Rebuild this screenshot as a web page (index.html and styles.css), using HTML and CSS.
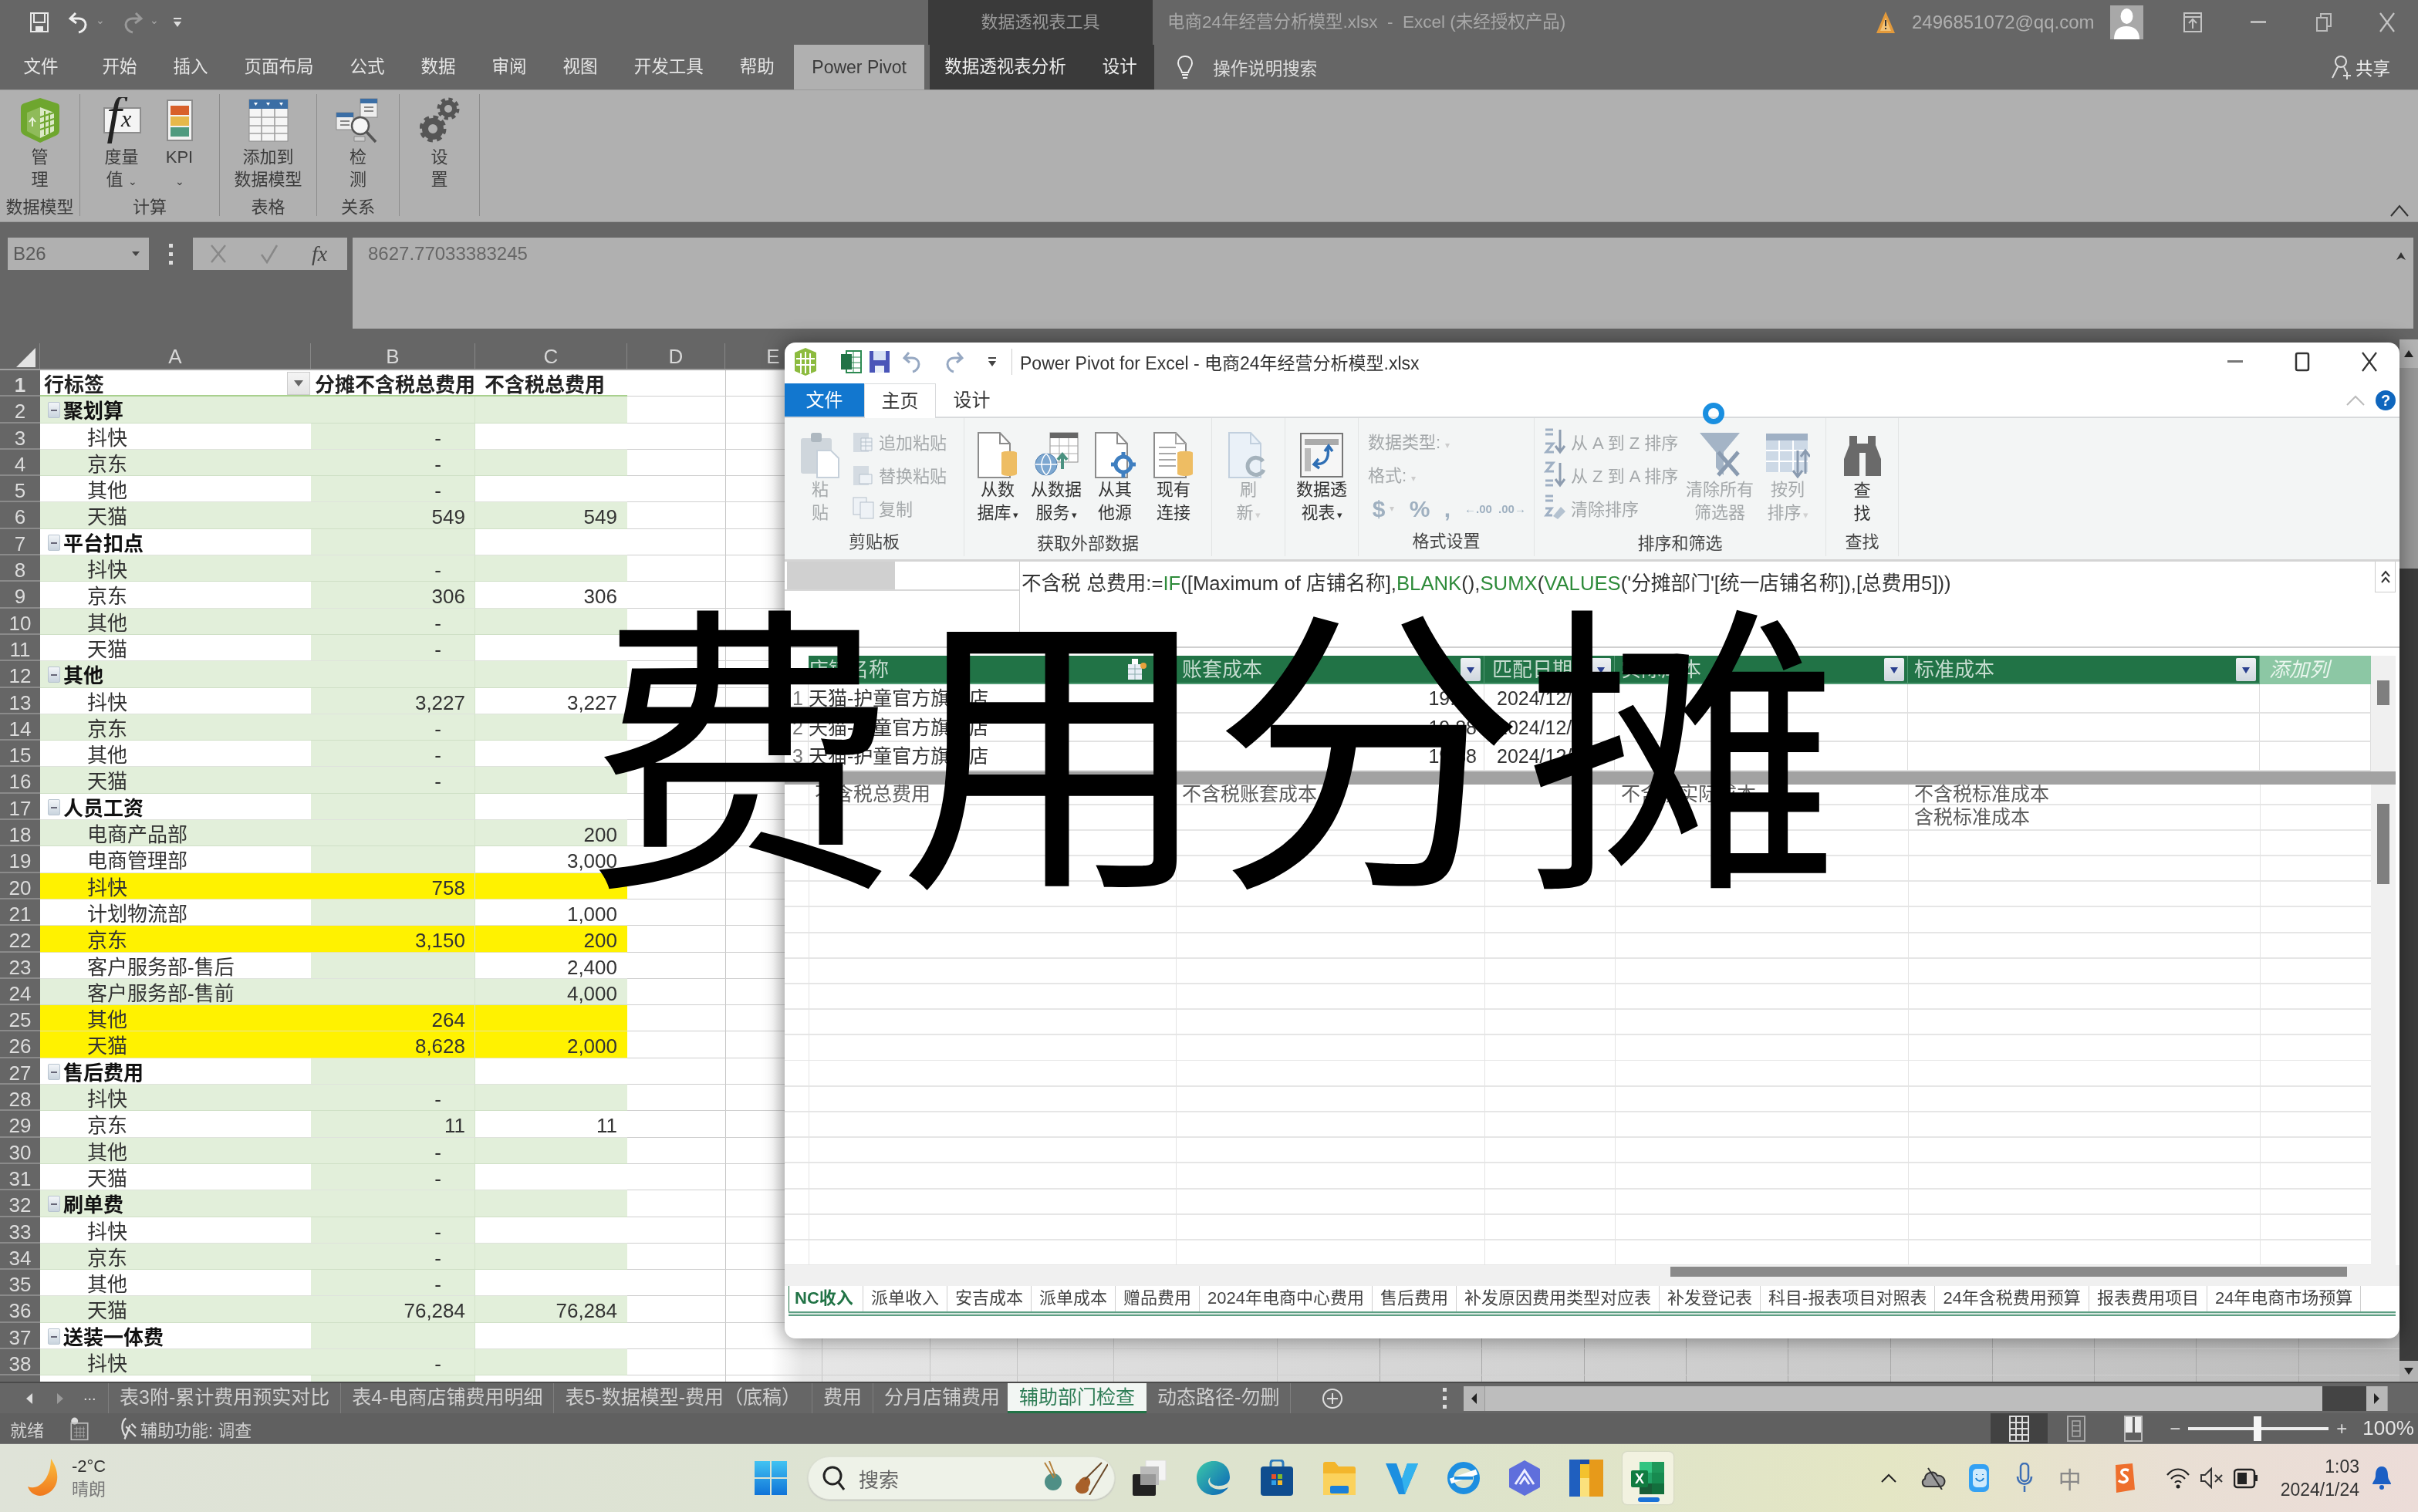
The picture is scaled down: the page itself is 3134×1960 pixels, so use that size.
FILE: index.html
```html
<!DOCTYPE html>
<html lang="zh-CN">
<head>
<meta charset="utf-8">
<title>费用分摊</title>
<link rel="stylesheet" href="styles.css">
</head>
<body>
<div class="app">
<div class="screen">

<header class="xl-title">
  <div class="qat">
    <svg width="26" height="28" viewBox="0 0 26 28"><path d="M2 2h22v24H2z" fill="none" stroke="#e8e8e8" stroke-width="2"/><path d="M6 2h14v12H6z" fill="#666" stroke="#e8e8e8" stroke-width="2"/><path d="M8 26v-7h10v7z" fill="#e8e8e8"/></svg>
    <svg class="q-undo" width="28" height="30" viewBox="0 0 28 30"><path d="M10 3 3 10l8 6M4 10h10c6 0 9 4 9 8 0 5-4 9-9 10" fill="none" stroke="#eee" stroke-width="3"/></svg>
    <span class="chev">⌄</span>
    <svg class="q-redo" width="28" height="30" viewBox="0 0 28 30"><path d="M18 3l7 7-8 6M24 10H14C8 10 5 14 5 18c0 5 4 9 9 10" fill="none" stroke="#999" stroke-width="3"/></svg>
    <span class="chev">⌄</span>
    <svg class="q-more" width="12" height="14" viewBox="0 0 12 14"><path d="M1 1h10v2H1zM1 6h10l-5 7z" fill="#ddd"/></svg>
  </div>
  <div class="ctx-label">数据透视表工具</div>
  <div class="doc-title">电商24年经营分析模型.xlsx&nbsp; -&nbsp; Excel (未经授权产品)</div>
  <div class="acct">
    <svg width="26" height="30" viewBox="0 0 26 30"><path d="M13 1 25 29H1z" fill="#e39a3b"/><path d="M13 9 20 26H6z" fill="#f3c276"/><path d="M12 12h2v8h-2zM12 22h2v2h-2z" fill="#333"/></svg>
    <span class="email">2496851072@qq.com</span>
    <span class="avatar"><svg width="43" height="44" viewBox="0 0 43 44"><ellipse cx="21.500" cy="14" rx="8" ry="10" fill="#fff"/><path d="M5 44c0-12 6-17 16-17s17 5 17 17z" fill="#fff"/></svg></span>
    <span class="winbtn"><svg width="26" height="28" viewBox="0 0 26 28"><path d="M2 2h22v24H2zM2 7h22M13 22V11M8 15l5-5 5 5" fill="none" stroke="#c4c4c4" stroke-width="2"/></svg></span>
    <span class="winbtn"><svg width="20" height="4" viewBox="0 0 20 4"><path d="M0 0h20v3H0z" fill="#bbb"/></svg></span>
    <span class="winbtn"><svg width="22" height="26" viewBox="0 0 22 26"><path d="M2 7h13v17H2zM7 7V2h13v16h-5" fill="none" stroke="#bbb" stroke-width="2"/></svg></span>
    <span class="winbtn"><svg width="22" height="28" viewBox="0 0 22 28"><path d="M2 2 20 26M20 2 2 26" stroke="#c4c4c4" stroke-width="2.200"/></svg></span>
  </div>
</header>

<nav class="xl-tabs">
  <span class="tab file">文件</span><span class="tab">开始</span><span class="tab">插入</span><span class="tab">页面布局</span><span class="tab">公式</span><span class="tab">数据</span><span class="tab">审阅</span><span class="tab">视图</span><span class="tab">开发工具</span><span class="tab">帮助</span>
  <span class="tab active">Power Pivot</span>
  <span class="ctx-tabs"><span class="ctx-tab">数据透视表分析</span><span class="ctx-tab">设计</span></span>
  <span class="tell">
    <svg width="24" height="32" viewBox="0 0 24 32"><path d="M12 2C6 2 3 6 3 11c0 5 4 7 5 12h8c1-5 5-7 5-12 0-5-3-9-9-9zM8 26h8M9 30h6" fill="none" stroke="#eee" stroke-width="2"/></svg>
    操作说明搜索
  </span>
  <span class="share">
    <svg width="28" height="32" viewBox="0 0 28 32"><circle cx="13" cy="9" r="7" fill="none" stroke="#ddd" stroke-width="2"/><path d="M9 16 2 30M17 16l3 6M16 27h10M21 22v10" fill="none" stroke="#ddd" stroke-width="2"/></svg>
    共享
  </span>
</nav>

<section class="xl-ribbon">
  <div class="xg w1">
    <div class="xg-body">
      <div class="xbtn"><svg width="52" height="60" viewBox="0 0 52 60"><path d="M26 1 48 8c3 1 3 3 3 6v28c0 4-1 6-5 8L26 59 7 50c-4-2-6-4-6-8V14c0-3 1-5 4-6z" fill="#6ea62e"/><path d="M26 13 44 20v24l-18 9z" fill="#dbe9c6"/><path d="M26 13 9 20v24l17 9z" fill="#8fbb5a"/><path d="M32 18v31M38 20v27M26 26l18-6M26 34l18-6M26 42l18-6" stroke="#6ea62e" stroke-width="2"/><path d="M16 38V28M12 32l4-5 4 5" fill="none" stroke="#e9f2dd" stroke-width="2"/></svg><span>管<br>理</span></div>
    </div>
    <div class="xg-label">数据模型</div>
  </div>
  <div class="xg w2">
    <div class="xg-body">
      <div class="xbtn"><svg width="52" height="60" viewBox="0 0 52 60"><rect x="3" y="14" width="47" height="32" fill="#f4f4f4" stroke="#8d8d8d" stroke-width="2"/><text x="6" y="47" class="fxf">f</text><text x="25" y="38" class="fxt">x</text></svg><span>度量<br>值 <small>⌄</small></span></div>
      <div class="xbtn"><svg width="36" height="56" viewBox="0 0 36 56"><rect x="2" y="2" width="32" height="52" fill="#f2f2f2" stroke="#8c8c8c" stroke-width="2"/><rect x="6" y="9" width="24" height="12" fill="#d8602a"/><rect x="6" y="23" width="24" height="12" fill="#e6b84a"/><rect x="6" y="37" width="24" height="12" fill="#4f9a7f"/></svg><span>KPI<br><small>⌄</small></span></div>
    </div>
    <div class="xg-label">计算</div>
  </div>
  <div class="xg w3">
    <div class="xg-body">
      <div class="xbtn wide"><svg width="52" height="56" viewBox="0 0 52 56"><rect x="1" y="1" width="50" height="54" fill="#f5f5f5" stroke="#8c8c8c"/><rect x="1" y="1" width="50" height="12" fill="#3b6ea5"/><path d="M17 13v42M34 13v42M1 24h50M1 35h50M1 45h50" stroke="#a0a0a0" stroke-width="1.600"/><path d="M7 5h5l-2.500 4zM23 5h5l-2.500 4zM40 5h5l-2.500 4z" fill="#fff"/></svg><span>添加到<br>数据模型</span></div>
    </div>
    <div class="xg-label">表格</div>
  </div>
  <div class="xg w4">
    <div class="xg-body">
      <div class="xbtn"><svg width="58" height="58" viewBox="0 0 58 58"><rect x="32" y="1" width="22" height="24" fill="#eee" stroke="#888"/><rect x="32" y="1" width="22" height="6" fill="#3b6ea5"/><path d="M37 12h12M37 17h12" stroke="#888" stroke-width="2"/><rect x="1" y="19" width="22" height="22" fill="#eee" stroke="#888"/><rect x="1" y="19" width="22" height="6" fill="#3b6ea5"/><path d="M6 30h12M6 35h12" stroke="#888" stroke-width="2"/><circle cx="32" cy="36" r="11" fill="#f5f5f5" stroke="#555" stroke-width="2.500"/><path d="m40 44 12 13" stroke="#555" stroke-width="3.500"/><path d="M24 50h14v6H24z" fill="#d0d0d0" stroke="#888"/></svg><span>检<br>测</span></div>
    </div>
    <div class="xg-label">关系</div>
  </div>
  <div class="xg w5">
    <div class="xg-body">
      <div class="xbtn"><svg width="52" height="58" viewBox="0 0 52 58"><g fill="none" stroke="#555"><circle cx="37" cy="14" r="8" stroke-width="6"/><circle cx="37" cy="14" r="12" stroke-width="5" stroke-dasharray="5 4.420"/><circle cx="17" cy="40" r="10" stroke-width="8"/><circle cx="17" cy="40" r="15" stroke-width="5" stroke-dasharray="6.500 5.280"/></g></svg><span>设<br>置</span></div>
    </div>
    <div class="xg-label xg-empty">&nbsp;</div>
  </div>
  <svg class="collapse" width="24" height="16" viewBox="0 0 24 16"><path d="M1 15 12 2l11 13" fill="none" stroke="#333" stroke-width="2"/></svg>
</section>

<section class="xl-formula">
  <div class="namebox"><span>B26</span><svg width="10" height="6" viewBox="0 0 10 6"><path d="M0 0h10L5 6z" fill="#444"/></svg></div>
  <div class="fdots"><i></i><i></i><i></i></div>
  <div class="fbtns">
    <svg width="22" height="26" viewBox="0 0 22 26"><path d="M2 2 20 24M20 2 2 24" stroke="#888" stroke-width="2.500"/></svg>
    <svg width="24" height="26" viewBox="0 0 24 26"><path d="M2 14 9 24 22 2" fill="none" stroke="#888" stroke-width="2.500"/></svg>
    <span class="fxlabel">fx</span>
  </div>
  <div class="fbar"><span>8627.77033383245</span><svg width="12" height="10" viewBox="0 0 12 10"><path d="M6 0l6 10-6-3-6 3z" fill="#333"/></svg></div>
</section>

<main class="sheetwrap">
  <div class="sheet">
    <div class="colhdr">
      <span class="corner"><svg width="26" height="26" viewBox="0 0 26 26"><path d="M25 0v25H0z" fill="#e4e4e4"/></svg></span>
      <span>A</span><span>B</span><span>C</span><span>D</span><span>E</span><span class="none"></span>
    </div>
    <div class="rows">
      <div class="r hd"><span class="rn">1</span><span class="a">行标签<i class="ddb"><svg width="12" height="8" viewBox="0 0 12 8"><path d="M0 0h12L6 8z" fill="#666"/></svg></i></span><span class="b clip">分摊不含税总费用</span><span class="c">不含税总费用</span><span class="x"></span></div>
      <div class="r g"><span class="rn">2</span><span class="a grp"><i class="tog"></i>聚划算</span><span class="b"></span><span class="c"></span><span class="x"></span></div>
      <div class="r"><span class="rn">3</span><span class="a leaf">抖快</span><span class="b dash">-</span><span class="c"></span><span class="x"></span></div>
      <div class="r g"><span class="rn">4</span><span class="a leaf">京东</span><span class="b dash">-</span><span class="c"></span><span class="x"></span></div>
      <div class="r"><span class="rn">5</span><span class="a leaf">其他</span><span class="b dash">-</span><span class="c"></span><span class="x"></span></div>
      <div class="r g"><span class="rn">6</span><span class="a leaf">天猫</span><span class="b">549</span><span class="c">549</span><span class="x"></span></div>
      <div class="r"><span class="rn">7</span><span class="a grp"><i class="tog"></i>平台扣点</span><span class="b"></span><span class="c"></span><span class="x"></span></div>
      <div class="r g"><span class="rn">8</span><span class="a leaf">抖快</span><span class="b dash">-</span><span class="c"></span><span class="x"></span></div>
      <div class="r"><span class="rn">9</span><span class="a leaf">京东</span><span class="b">306</span><span class="c">306</span><span class="x"></span></div>
      <div class="r g"><span class="rn">10</span><span class="a leaf">其他</span><span class="b dash">-</span><span class="c"></span><span class="x"></span></div>
      <div class="r"><span class="rn">11</span><span class="a leaf">天猫</span><span class="b dash">-</span><span class="c"></span><span class="x"></span></div>
      <div class="r g"><span class="rn">12</span><span class="a grp"><i class="tog"></i>其他</span><span class="b"></span><span class="c"></span><span class="x"></span></div>
      <div class="r"><span class="rn">13</span><span class="a leaf">抖快</span><span class="b">3,227</span><span class="c">3,227</span><span class="x"></span></div>
      <div class="r g"><span class="rn">14</span><span class="a leaf">京东</span><span class="b dash">-</span><span class="c"></span><span class="x"></span></div>
      <div class="r"><span class="rn">15</span><span class="a leaf">其他</span><span class="b dash">-</span><span class="c"></span><span class="x"></span></div>
      <div class="r g"><span class="rn">16</span><span class="a leaf">天猫</span><span class="b dash">-</span><span class="c"></span><span class="x"></span></div>
      <div class="r"><span class="rn">17</span><span class="a grp"><i class="tog"></i>人员工资</span><span class="b"></span><span class="c"></span><span class="x"></span></div>
      <div class="r g"><span class="rn">18</span><span class="a leaf">电商产品部</span><span class="b"></span><span class="c">200</span><span class="x"></span></div>
      <div class="r"><span class="rn">19</span><span class="a leaf">电商管理部</span><span class="b"></span><span class="c">3,000</span><span class="x"></span></div>
      <div class="r y"><span class="rn">20</span><span class="a leaf">抖快</span><span class="b">758</span><span class="c"></span><span class="x"></span></div>
      <div class="r"><span class="rn">21</span><span class="a leaf">计划物流部</span><span class="b"></span><span class="c">1,000</span><span class="x"></span></div>
      <div class="r y"><span class="rn">22</span><span class="a leaf">京东</span><span class="b">3,150</span><span class="c">200</span><span class="x"></span></div>
      <div class="r"><span class="rn">23</span><span class="a leaf">客户服务部-售后</span><span class="b"></span><span class="c">2,400</span><span class="x"></span></div>
      <div class="r g"><span class="rn">24</span><span class="a leaf">客户服务部-售前</span><span class="b"></span><span class="c">4,000</span><span class="x"></span></div>
      <div class="r y"><span class="rn">25</span><span class="a leaf">其他</span><span class="b">264</span><span class="c"></span><span class="x"></span></div>
      <div class="r y"><span class="rn">26</span><span class="a leaf">天猫</span><span class="b">8,628</span><span class="c">2,000</span><span class="x"></span></div>
      <div class="r"><span class="rn">27</span><span class="a grp"><i class="tog"></i>售后费用</span><span class="b"></span><span class="c"></span><span class="x"></span></div>
      <div class="r g"><span class="rn">28</span><span class="a leaf">抖快</span><span class="b dash">-</span><span class="c"></span><span class="x"></span></div>
      <div class="r"><span class="rn">29</span><span class="a leaf">京东</span><span class="b">11</span><span class="c">11</span><span class="x"></span></div>
      <div class="r g"><span class="rn">30</span><span class="a leaf">其他</span><span class="b dash">-</span><span class="c"></span><span class="x"></span></div>
      <div class="r"><span class="rn">31</span><span class="a leaf">天猫</span><span class="b dash">-</span><span class="c"></span><span class="x"></span></div>
      <div class="r g"><span class="rn">32</span><span class="a grp"><i class="tog"></i>刷单费</span><span class="b"></span><span class="c"></span><span class="x"></span></div>
      <div class="r"><span class="rn">33</span><span class="a leaf">抖快</span><span class="b dash">-</span><span class="c"></span><span class="x"></span></div>
      <div class="r g"><span class="rn">34</span><span class="a leaf">京东</span><span class="b dash">-</span><span class="c"></span><span class="x"></span></div>
      <div class="r"><span class="rn">35</span><span class="a leaf">其他</span><span class="b dash">-</span><span class="c"></span><span class="x"></span></div>
      <div class="r g"><span class="rn">36</span><span class="a leaf">天猫</span><span class="b">76,284</span><span class="c">76,284</span><span class="x"></span></div>
      <div class="r"><span class="rn">37</span><span class="a grp"><i class="tog"></i>送装一体费</span><span class="b"></span><span class="c"></span><span class="x"></span></div>
      <div class="r g"><span class="rn">38</span><span class="a leaf">抖快</span><span class="b dash">-</span><span class="c"></span><span class="x"></span></div>
      <div class="r"><span class="rn"></span><span class="a"></span><span class="b"></span><span class="c"></span><span class="x"></span></div>
    </div>
  </div>
  <div class="vscroll">
    <span class="vbtn"><svg width="12" height="9" viewBox="0 0 12 9"><path d="M6 0l6 9H0z" fill="#222"/></svg></span>
    <span class="vthumb"></span>
    <span class="vtrack"></span>
    <span class="vbtn low"><svg width="12" height="9" viewBox="0 0 12 9"><path d="M0 0h12L6 9z" fill="#222"/></svg></span>
  </div>
</main>

<div class="sheettabs">
  <span class="navs"><svg width="8" height="14" viewBox="0 0 8 14"><path d="M8 0v14L0 7z" fill="#ddd"/></svg><svg width="8" height="14" viewBox="0 0 8 14"><path d="M0 0v14l8-7z" fill="#999"/></svg><span class="more">...</span></span>
  <span class="stab">表3附-累计费用预实对比</span><span class="stab">表4-电商店铺费用明细</span><span class="stab">表5-数据模型-费用（底稿）</span><span class="stab">费用</span><span class="stab">分月店铺费用</span><span class="stab on">辅助部门检查</span><span class="stab">动态路径-勿删</span>
  <span class="addsheet"><svg width="28" height="28" viewBox="0 0 28 28"><circle cx="14" cy="14" r="12" fill="none" stroke="#ddd" stroke-width="2"/><path d="M14 7v14M7 14h14" stroke="#ddd" stroke-width="2"/></svg></span>
  <span class="tdots"><i></i><i></i><i></i></span>
  <span class="hscroll"><span class="hb"><svg width="7" height="14" viewBox="0 0 7 14"><path d="M7 0v14L0 7z" fill="#222"/></svg></span><span class="hthumb"></span><span class="htrack"></span><span class="hb"><svg width="7" height="14" viewBox="0 0 7 14"><path d="M0 0v14l7-7z" fill="#222"/></svg></span></span>
</div>

<div class="statusbar">
  <span class="ready">就绪</span>
  <svg class="calc" width="26" height="34" viewBox="0 0 26 34"><circle cx="6" cy="6" r="5" fill="#ddd"/><rect x="1" y="9" width="24" height="24" fill="none" stroke="#bbb" stroke-width="2"/><path d="M5 17h16M5 22h16M5 27h16M9 14v16M14 14v16M19 14v16" stroke="#aaa"/></svg>
  <svg class="acc" width="26" height="34" viewBox="0 0 26 34"><path d="M10 2C4 6 2 18 9 27M16 12 8 32M10 14l14 14M18 10 24 16" fill="none" stroke="#ddd" stroke-width="2.500"/></svg>
  <span class="accessibility">辅助功能: 调查</span>
  <span class="viewbtns">
    <span class="vb on"><svg width="28" height="36" viewBox="0 0 28 36"><path d="M2 2h24v32H2zM10 2v32M18 2v32M2 10h24M2 18h24M2 26h24" fill="none" stroke="#ddd" stroke-width="2"/></svg></span>
    <span class="vb"><svg width="26" height="36" viewBox="0 0 26 36"><path d="M2 2h22v32H2z" fill="none" stroke="#aaa" stroke-width="2"/><path d="M8 8h10v20H8zM8 14h10M8 21h10" fill="none" stroke="#aaa" stroke-width="1.500"/></svg></span>
    <span class="vb"><svg width="26" height="36" viewBox="0 0 26 36"><path d="M2 2h22v32H2z" fill="none" stroke="#bbb" stroke-width="2"/><path d="M3 3h9v20H3zM15 3h8v20h-8z" fill="#eee"/></svg></span>
  </span>
  <span class="zoomctl"><i class="zm">−</i><span class="slider"><span class="knob"></span></span><i class="zm">+</i></span>
  <span class="pct">100%</span>
</div>

<footer class="taskbar">
  <div class="weather">
    <svg width="42" height="50" viewBox="0 0 42 50"><defs><linearGradient id="moon" x1="0" y1="0" x2="0" y2="1"><stop offset="0" stop-color="#fbbf3e"/><stop offset="1" stop-color="#f0781d"/></linearGradient></defs><path d="M30 0c10 14 14 36-6 46C14 51 3 46 0 36c14 6 30-10 30-36z" fill="url(#moon)"/></svg>
    <div class="wtext"><span>-2°C</span><span class="dim">晴朗</span></div>
  </div>
  <div class="center">
    <svg class="winlogo" width="42" height="44" viewBox="0 0 42 44"><defs><linearGradient id="wl" x1="0" y1="0" x2="0" y2="1"><stop offset="0" stop-color="#42c3f2"/><stop offset="1" stop-color="#0f73d8"/></linearGradient></defs><path d="M0 0h20v21H0zM22 0h20v21H22zM0 23h20v21H0zM22 23h20v21H22z" fill="url(#wl)"/></svg>
    <div class="search">
      <svg width="32" height="36" viewBox="0 0 32 36"><circle cx="14" cy="15" r="11" fill="none" stroke="#222" stroke-width="3"/><path d="m22 24 7 9" stroke="#222" stroke-width="3"/></svg>
      <span>搜索</span>
      <svg class="violin" width="84" height="44" viewBox="0 0 84 44"><circle cx="13" cy="27" r="11" fill="#4f8f86"/><path d="M2 2l12 20M8 0l8 20" stroke="#b4813c" stroke-width="2"/><path d="M48 24c6-6 12-4 13 2 1 5-3 6-2 10 0 5-8 8-13 5-5-3-5-9-2-12 2-2 3-3 4-5z" fill="#a8602a"/><path d="M54 24 76 2M60 44 84 4" stroke="#6b4a2a" stroke-width="2"/></svg>
    </div>
    <svg class="tk tv" width="46" height="46" viewBox="0 0 46 46"><rect x="18" y="0" width="26" height="26" fill="#f4f4f4" stroke="#ddd"/><rect x="11" y="8" width="24" height="24" fill="#bbb"/><rect x="1" y="18" width="30" height="28" rx="2" fill="#222"/><rect x="11" y="18" width="20" height="14" fill="#999"/></svg>
    <svg class="tk" width="46" height="46" viewBox="0 0 46 46"><defs><linearGradient id="ed" x1="0" y1="0" x2="1" y2="1"><stop offset="0" stop-color="#3cc9a8"/><stop offset="1" stop-color="#0a62b8"/></linearGradient></defs><path d="M23 1C10 1 1 11 1 23c0 13 10 22 22 22 8 0 15-4 19-10-6 3-15 4-21 0-5-3-7-10-2-13-4 8 6 12 12 11 7 0 13-4 13-11C44 9 35 1 23 1z" fill="url(#ed)"/></svg>
    <svg class="tk" width="44" height="48" viewBox="0 0 44 48"><path d="M14 10V5c0-3 2-4 4-4h8c2 0 4 1 4 4v5" fill="none" stroke="#2d7bbd" stroke-width="3"/><rect x="1" y="9" width="42" height="38" rx="4" fill="#0f4d8f"/><path d="M15 19h6v6h-6z" fill="#e8502a"/><path d="M23 19h6v6h-6z" fill="#7db92e"/><path d="M15 27h6v6h-6z" fill="#2f9fe8"/><path d="M23 27h6v6h-6z" fill="#f3b92a"/></svg>
    <svg class="tk" width="44" height="44" viewBox="0 0 44 44"><path d="M1 4c0-2 1-3 3-3h12l5 6h19c2 0 3 1 3 3v34H1z" fill="#f3b62c"/><path d="M1 16h42v28H1z" fill="#fbd25c"/><rect x="10" y="32" width="24" height="10" rx="2" fill="#1b80d8"/></svg>
    <svg class="tk" width="44" height="46" viewBox="0 0 44 46"><path d="M1 4h14l7 20 7-20h14L26 44h-8z" fill="#1c8fe0"/><path d="M22 24l7-20h14L26 44z" fill="#32b2ee"/></svg>
    <svg class="tk" width="42" height="44" viewBox="0 0 42 44"><circle cx="21" cy="22" r="17" fill="none" stroke="#1d8ee0" stroke-width="8"/><path d="M4 26 38 14" stroke="#fff" stroke-width="7"/><path d="M9 22h24" stroke="#1d8ee0" stroke-width="4"/></svg>
    <svg class="tk" width="42" height="48" viewBox="0 0 42 48"><path d="M21 1 41 12v24L21 47 1 36V12z" fill="#5f6fdc"/><path d="M9 32 21 14l12 18M15 32l6-9 6 9" fill="none" stroke="#eef" stroke-width="3"/></svg>
    <svg class="tk" width="44" height="48" viewBox="0 0 44 48"><path d="M0 0h44v48H0z" fill="#1a4fa8"/><path d="M8 6h36v42H8z" fill="#f3c22e"/><path d="M26 0h18v48H26z" fill="#e79a1a"/><path d="M0 0h14v48H0z" fill="#1f5fbf"/><path d="M14 24h12v24H14z" fill="#fbe17c"/></svg>
    <span class="xltile"><svg width="46" height="46" viewBox="0 0 46 46"><rect x="12" y="2" width="32" height="42" rx="2" fill="#21a366"/><path d="M12 2h32v14H12z" fill="#33c481"/><path d="M12 30h32v14H12z" fill="#185c37"/><path d="M28 2h16v42H28z" fill="#107c41" opacity=".6"/><rect x="1" y="13" width="22" height="22" rx="2" fill="#107c41"/><text x="12" y="30" class="xt">X</text></svg><i></i></span>
  </div>
  <div class="tray">
    <svg class="t0" width="20" height="12" viewBox="0 0 20 12"><path d="M1 11 10 2l9 9" fill="none" stroke="#222" stroke-width="2"/></svg>
    <svg class="t1" width="34" height="30" viewBox="0 0 34 30"><path d="M8 26C2 26 1 18 6 16 6 8 18 4 22 12c6-1 11 4 9 10-1 3-3 4-6 4z" fill="#999" stroke="#333" stroke-width="2"/><path d="M10 2 28 30" stroke="#333" stroke-width="2"/></svg>
    <svg class="t2" width="28" height="38" viewBox="0 0 28 38"><rect x="1" y="1" width="26" height="36" rx="7" fill="#34a1f3"/><rect x="6" y="7" width="18" height="24" rx="5" fill="#cfeafc"/><path d="M10 19c2 5 8 5 10 0M11 14v1M19 14v1" fill="none" stroke="#1a7fd0" stroke-width="2"/></svg>
    <svg class="t3" width="22" height="40" viewBox="0 0 22 40"><rect x="6" y="1" width="10" height="23" rx="5" fill="none" stroke="#3e6fb5" stroke-width="2.500"/><path d="M2 18c0 13 18 13 18 0M11 30v8" fill="none" stroke="#3e6fb5" stroke-width="2.500"/></svg>
    <span class="ime">中</span>
    <svg class="t4" width="30" height="40" viewBox="0 0 30 40"><path d="M4 3 26 1l3 34-24 4z" fill="#ee6f2d"/><path d="M21 10c-8-3-12 2-7 6 6 3 7 7 2 9-3 1-6 0-8-2" fill="none" stroke="#fff" stroke-width="3.500"/></svg>
    <svg class="t5" width="32" height="28" viewBox="0 0 32 28"><path d="M2 10c8-10 20-10 28 0M7 15c5-6 13-6 18 0M12 20c2-3 6-3 8 0" fill="none" stroke="#222" stroke-width="2.200"/><circle cx="16" cy="25" r="2.500" fill="#222"/></svg>
    <svg class="t6" width="30" height="28" viewBox="0 0 30 28"><path d="M2 10h5l8-8v24l-8-8H2z" fill="none" stroke="#333" stroke-width="2"/><path d="m20 10 9 9M29 10l-9 9" stroke="#333" stroke-width="2"/></svg>
    <svg class="t7" width="32" height="28" viewBox="0 0 32 28"><rect x="1" y="3" width="26" height="23" rx="4" fill="none" stroke="#222" stroke-width="2.500"/><rect x="5" y="7" width="12" height="15" fill="#222"/><path d="M28 10h3v8h-3z" fill="#222"/></svg>
    <div class="clock"><span>1:03</span><span>2024/1/24</span></div>
    <svg class="bell" width="26" height="30" viewBox="0 0 26 30"><path d="M13 0C6 0 5 7 5 12 5 17 1 20 1 23h24c0-3-4-6-4-11C21 7 20 0 13 0z" fill="#1c5fc4"/><circle cx="13" cy="27" r="3" fill="#1c5fc4"/></svg>
  </div>
</footer>

<section class="pp">
  <div class="pp-title">
    <svg width="30" height="38" viewBox="0 0 30 38"><path d="M15 1 29 7v24l-14 6L1 31V7z" fill="#8cbb3f"/><path d="M15 6v28M9 8v26M21 8v26M3 15h24M3 23h24" stroke="#fff" stroke-width="2"/></svg>
    <svg class="pp-xl" width="28" height="32" viewBox="0 0 28 32"><rect x="8" y="2" width="19" height="28" fill="#fff" stroke="#2d8a52" stroke-width="2"/><path d="M17 2v28M8 10h19M8 17h19M8 24h19" stroke="#2d8a52"/><rect x="1" y="6" width="14" height="20" fill="#217346"/></svg>
    <svg class="pp-save" width="28" height="30" viewBox="0 0 28 30"><path d="M1 1h26v28H1z" fill="#4a55b8"/><path d="M6 1h16v12H6z" fill="#d8e2f5"/><path d="M8 29v-9h12v9z" fill="#e8eef8"/></svg>
    <svg class="pp-undo" width="26" height="30" viewBox="0 0 26 30"><path d="M9 3 3 10l7 6M4 10h9c6 0 9 4 9 8 0 5-4 9-8 10" fill="none" stroke="#96a8c2" stroke-width="3"/></svg>
    <svg class="pp-redo" width="26" height="30" viewBox="0 0 26 30"><path d="M17 3l6 7-7 6M22 10h-9c-6 0-9 4-9 8 0 5 4 9 8 10" fill="none" stroke="#96a8c2" stroke-width="3"/></svg>
    <svg class="pp-more" width="12" height="14" viewBox="0 0 12 14"><path d="M1 1h10v2H1zM1 6h10l-5 7z" fill="#444"/></svg>
    <span class="pp-name">Power Pivot for Excel - 电商24年经营分析模型.xlsx</span>
    <span class="pp-win"><svg width="20" height="3" viewBox="0 0 20 3"><path d="M0 0h20v3H0z" fill="#777"/></svg></span>
    <span class="pp-win"><svg width="20" height="26" viewBox="0 0 20 26"><rect x="2" y="2" width="16" height="22" rx="2" fill="none" stroke="#333" stroke-width="2.500"/></svg></span>
    <span class="pp-win"><svg width="20" height="28" viewBox="0 0 20 28"><path d="M1 2 19 26M19 2 1 26" stroke="#333" stroke-width="2.200"/></svg></span>
  </div>
  <div class="pp-tabs">
    <span class="pt file">文件</span><span class="pt on">主页</span><span class="pt">设计</span>
    <span class="pp-help">
      <svg width="24" height="14" viewBox="0 0 24 14"><path d="M1 13 12 2l11 11" fill="none" stroke="#bbb" stroke-width="2"/></svg>
      <svg width="26" height="28" viewBox="0 0 26 28"><circle cx="13" cy="14" r="13" fill="#0f66bd"/><text x="13" y="21" class="qm">?</text></svg>
    </span>
  </div>
  <div class="pp-ribbon">
    <div class="pg g1">
      <div class="pg-body">
        <div class="pb dim w70"><svg width="52" height="60" viewBox="0 0 52 60"><rect x="1" y="8" width="40" height="46" rx="3" fill="#cfd6dc"/><rect x="14" y="1" width="14" height="12" rx="3" fill="#aeb8c0"/><path d="M22 24h18l10 10v25H22z" fill="#fff" stroke="#c6d0da" stroke-width="2"/></svg><span>粘<br>贴</span></div>
        <div class="plist dim">
          <div class="pl"><svg width="30" height="32" viewBox="0 0 30 32"><rect x="2" y="5" width="20" height="25" fill="#d4dbe2"/><path d="M12 12h14v16H12zM12 17h14M12 22h14M18 12v16" fill="#eef2f6" stroke="#b5c0cb"/></svg>追加粘贴</div>
          <div class="pl"><svg width="30" height="32" viewBox="0 0 30 32"><rect x="2" y="5" width="20" height="25" fill="#d4dbe2"/><path d="M10 16h16v12H10z" fill="#eef2f6" stroke="#b5c0cb"/></svg>替换粘贴</div>
          <div class="pl"><svg width="30" height="32" viewBox="0 0 30 32"><rect x="2" y="3" width="17" height="22" fill="#eef2f6" stroke="#b5c0cb"/><rect x="11" y="9" width="17" height="21" fill="#eef2f6" stroke="#b5c0cb"/></svg>复制</div>
        </div>
      </div>
      <div class="pg-label">剪贴板</div>
    </div>
    <div class="pg g2">
      <div class="pg-body">
        <div class="pb"><svg width="54" height="60" viewBox="0 0 54 60"><path d="M2 1h28l13 14v44H2z" fill="#fff" stroke="#8c8c8c" stroke-width="2"/><path d="M30 1v14h13" fill="none" stroke="#8c8c8c" stroke-width="2"/><path d="M32 27c0-3 20-3 20 0v27c0 4-20 4-20 0z" fill="#eebd63"/></svg><span>从数<br>据库<small>▾</small></span></div>
        <div class="pb"><svg width="60" height="60" viewBox="0 0 60 60"><rect x="22" y="1" width="36" height="38" fill="#fff" stroke="#8c8c8c"/><rect x="22" y="1" width="36" height="7" fill="#666"/><path d="M34 8v30M46 8v30M22 18h36M22 28h36" stroke="#aaa"/><circle cx="17" cy="42" r="14" fill="#7da7d0" stroke="#4f7fb0"/><path d="M3 42h28M17 28c-8 8-8 20 0 28M17 28c8 8 8 20 0 28" fill="none" stroke="#fff" stroke-width="1.500"/><path d="M38 48V30M32 36l6-7 6 7" fill="none" stroke="#4a9180" stroke-width="4"/></svg><span>从数据<br>服务<small>▾</small></span></div>
        <div class="pb"><svg width="54" height="60" viewBox="0 0 54 60"><path d="M2 1h28l13 14v44H2z" fill="#fff" stroke="#8c8c8c" stroke-width="2"/><path d="M30 1v14h13" fill="none" stroke="#8c8c8c" stroke-width="2"/><circle cx="38" cy="42" r="10" fill="none" stroke="#3f7fc0" stroke-width="5"/><path d="M38 26v7M38 51v8M22 42h7M47 42h7" stroke="#3f7fc0" stroke-width="5"/></svg><span>从其<br>他源</span></div>
        <div class="pb"><svg width="54" height="60" viewBox="0 0 54 60"><path d="M2 1h28l13 14v44H2z" fill="#fff" stroke="#8c8c8c" stroke-width="2"/><path d="M30 1v14h13M8 20h22M8 28h22M8 36h22M8 44h22" fill="none" stroke="#a8a8a8" stroke-width="2"/><path d="M32 27c0-3 20-3 20 0v27c0 4-20 4-20 0z" fill="#eebd63"/></svg><span>现有<br>连接</span></div>
      </div>
      <div class="pg-label">获取外部数据</div>
    </div>
    <div class="pg g3">
      <div class="pg-body center">
        <div class="pb dim"><svg width="54" height="60" viewBox="0 0 54 60"><path d="M2 1h28l13 14v44H2z" fill="#eaf1f8" stroke="#c2d0de" stroke-width="2"/><path d="M30 1v14h13" fill="none" stroke="#c2d0de" stroke-width="2"/><path d="M46 38a11 11 0 1 0 1 11" fill="none" stroke="#a4b2bc" stroke-width="5"/></svg><span>刷<br>新<small class="fa">▾</small></span></div>
      </div>
      <div class="pg-label">&nbsp;</div>
    </div>
    <div class="pg g4">
      <div class="pg-body center">
        <div class="pb"><svg width="56" height="58" viewBox="0 0 56 58"><rect x="1" y="1" width="54" height="56" fill="#f6f6f6" stroke="#777" stroke-width="2"/><rect x="6" y="8" width="44" height="8" fill="#aaa"/><rect x="6" y="20" width="8" height="30" fill="#bbb"/><path d="M20 40c12 2 18-6 16-20M32 24l5-7 5 7M24 34l-6 7 7 5" fill="none" stroke="#2f6fb5" stroke-width="3.500"/></svg><span>数据透<br>视表<small>▾</small></span></div>
      </div>
      <div class="pg-label">&nbsp;</div>
    </div>
    <div class="pg g5">
      <div class="pg-body fmt dim">
        <div class="fr">数据类型: <small>▾</small></div>
        <div class="fr">格式: <small>▾</small></div>
        <div class="fr syms"><b>$</b><small>▾</small><b class="pc">%</b><b class="pc">,</b><b class="tiny">←.00</b><b class="tiny">.00→</b></div>
      </div>
      <div class="pg-label">格式设置</div>
    </div>
    <div class="pg g6">
      <div class="pg-body">
        <div class="plist dim sort">
          <div class="pl"><svg width="30" height="34" viewBox="0 0 30 34"><path d="M2 2h10M2 8h10M2 20h10l-9 11h10" fill="none" stroke="#9fb0c4" stroke-width="3"/><path d="M21 2v28M15 23l6 8 6-8" fill="none" stroke="#8e9db0" stroke-width="3"/></svg>从 A 到 Z 排序</div>
          <div class="pl"><svg width="30" height="34" viewBox="0 0 30 34"><path d="M2 2h10l-9 11h10M2 25h10M2 31h10" fill="none" stroke="#9fb0c4" stroke-width="3"/><path d="M21 2v28M15 23l6 8 6-8" fill="none" stroke="#8e9db0" stroke-width="3"/></svg>从 Z 到 A 排序</div>
          <div class="pl"><svg width="30" height="34" viewBox="0 0 30 34"><path d="M2 2h10M2 8h10M2 18h8l-7 9h8" fill="none" stroke="#9fb0c4" stroke-width="3"/><path d="m12 28 10-12 6 6-10 10z" fill="#b4c2d0"/></svg>清除排序</div>
        </div>
        <div class="pb dim w90"><svg width="56" height="60" viewBox="0 0 56 60"><path d="M2 1h52L33 26v30L23 46V26z" fill="#a4b4c6"/><path d="m26 26 26 30M52 26 26 56" stroke="#8a9bb0" stroke-width="5"/></svg><span>清除所有<br>筛选器</span></div>
        <div class="pb dim w82"><svg width="58" height="60" viewBox="0 0 58 60"><rect x="1" y="2" width="54" height="50" fill="#cdd9e6"/><rect x="1" y="2" width="54" height="9" fill="#9fb0c4"/><path d="M18 11v41M36 11v41M1 24h54M1 38h54" stroke="#fff" stroke-width="2"/><path d="M42 58V24M36 50l6 8 6-8M52 24v30M46 32l6-8 6 8" fill="none" stroke="#8a9bb0" stroke-width="3"/></svg><span>按列<br>排序<small class="fa">▾</small></span></div>
      </div>
      <div class="pg-label">排序和筛选</div>
    </div>
    <div class="pg g7">
      <div class="pg-body center">
        <div class="pb"><svg width="50" height="56" viewBox="0 0 50 56"><path d="M8 2h10v10h14V2h10v12l7 18v22H29V24h-8v30H1V32l7-18z" fill="#6a6a6a"/></svg><span>查<br>找</span></div>
      </div>
      <div class="pg-label">查找</div>
    </div>
  </div>
  <div class="pp-formula">
    <div class="pf-name"><div class="pf-box"><i></i></div></div>
    <div class="pf-text">不含税 总费用:=<em>IF</em>([Maximum of 店铺名称],<em>BLANK</em>(),<em>SUMX</em>(<em>VALUES</em>('分摊部门'[统一店铺名称]),[总费用5]))</div>
    <span class="pf-exp"><svg width="12" height="18" viewBox="0 0 12 18"><path d="M1 8l5-6 5 6M1 16l5-6 5 6" fill="none" stroke="#333" stroke-width="2"/></svg></span>
  </div>
  <div class="pp-grid">
    <div class="pp-top">
      <div class="tr th">
        <span></span>
        <span>店铺名称<svg class="ticon" width="28" height="30" viewBox="0 0 28 30"><rect x="3" y="8" width="18" height="20" fill="#e8eef6"/><path d="M3 14h18M3 21h18M12 8v20" stroke="#8aa"/><circle cx="23" cy="10" r="4" fill="#e8a23c"/><rect x="8" y="1" width="8" height="7" fill="#fff"/></svg></span>
        <span>账套成本<i class="flt"></i></span>
        <span>匹配日期<i class="flt"></i></span>
        <span>实际成本<i class="flt"></i></span>
        <span>标准成本<i class="flt"></i></span>
        <span class="addcol">添加列</span>
      </div>
      <div class="tr"><span class="num">1</span><span>天猫-护童官方旗舰店</span><span class="rt">19.88</span><span>2024/12/1..</span><span></span><span></span><span></span></div>
      <div class="tr"><span class="num">2</span><span>天猫-护童官方旗舰店</span><span class="rt">19.88</span><span>2024/12/1..</span><span></span><span></span><span></span></div>
      <div class="tr"><span class="num">3</span><span>天猫-护童官方旗舰店</span><span class="rt">19.88</span><span>2024/12/1..</span><span></span><span></span><span></span></div>
    </div>
    <div class="pp-sc upper"><i></i></div>
    <div class="pp-split"></div>
    <div class="pp-meas">
      <div class="mr first"><span></span><span>不含税总费用</span><span>不含税账套成本</span><span></span><span>不含税实际成本</span><span>不含税标准成本</span><span></span></div>
      <div class="mr"><span></span><span></span><span></span><span></span><span></span><span>含税标准成本</span><span></span></div>
    </div>
    <div class="pp-sc lower"><i></i></div>
  </div>
  <div class="pp-hs"><i></i></div>
  <div class="pp-sheets">
    <span class="ps on">NC收入</span><span class="ps">派单收入</span><span class="ps">安吉成本</span><span class="ps">派单成本</span><span class="ps">赠品费用</span><span class="ps">2024年电商中心费用</span><span class="ps">售后费用</span><span class="ps">补发原因费用类型对应表</span><span class="ps">补发登记表</span><span class="ps">科目-报表项目对照表</span><span class="ps">24年含税费用预算</span><span class="ps">报表费用项目</span><span class="ps">24年电商市场预算</span>
  </div>
  <div class="pp-rule"></div>
</section>

<div class="ring"></div>
</div>
<div class="headline">费用分摊</div>
</div>
</body>
</html>
```
FILE: styles.css
```css
* { box-sizing: border-box; }
html, body { margin: 0; padding: 0; }
body { width: 3134px; height: 1960px; overflow: hidden; background: #666;
  font-family: "Liberation Sans", "Noto Sans CJK SC", sans-serif; color: #333; }
svg { display: block; flex: none; }
i, em { font-style: normal; }
small { font-size: 14px; }

.app { position: relative; width: 3134px; height: 1960px; overflow: hidden; }
.screen { position: relative; width: 100%; height: 100%; filter: blur(.55px); }
.headline { position: absolute; left: 759px; top: 720px; width: 1620px; font-size: 400px; line-height: 470px; color: #000;
  font-family: "Noto Sans CJK SC", sans-serif; white-space: nowrap; transform: scale(1.015, .98); transform-origin: left top; }

/* Excel title */
.xl-title { display: flex; height: 58px; background: #666; align-items: stretch; }
.qat { width: 1203px; display: flex; align-items: center; padding-left: 38px; }
.q-undo { margin-left: 24px; }
.chev { color: #aaa; font-size: 14px; margin: -6px 0 0 8px; width: 22px; }
.q-redo { margin-left: 12px; }
.q-more { margin-left: 8px; }
.ctx-label { width: 291px; background: #3a3a3a; color: #9b9b9b; font-size: 22px; text-align: center; line-height: 58px; }
.doc-title { padding-left: 19px; color: #a8a8a8; font-size: 22.500px; line-height: 58px; white-space: nowrap; }
.acct { margin-left: auto; display: flex; align-items: center; }
.email { margin-left: 21px; color: #b0b0b0; font-size: 24px; width: 257px; white-space: nowrap; }
.avatar { width: 43px; height: 44px; background: #a8a8a8; margin-right: 21px; overflow: hidden; }
.winbtn { width: 85px; height: 44px; display: flex; align-items: center; justify-content: center; }
.winbtn:last-child { width: 80px; }

/* Excel tabs */
.xl-tabs { display: flex; height: 58px; background: #666; font-size: 22.500px; color: #e6e6e6; align-items: stretch; }
.tab { padding: 0 23.500px; line-height: 58px; white-space: nowrap; }
.tab.file { margin: 0 10px 0 7px; }
.tab.active { margin-left: 2px; width: 169px; padding: 0; text-align: center; background: #b0b0b0; color: #3a3a3a; font-size: 23px; }
.ctx-tabs { margin-left: 7px; width: 291px; background: #3a3a3a; display: flex; }
.ctx-tab { line-height: 58px; color: #eee; margin-left: 19px; white-space: nowrap; }
.ctx-tab + .ctx-tab { margin-left: 47px; }
.tell { display: flex; align-items: center; gap: 24px; margin-left: 28px; color: #ddd; white-space: nowrap; }
.share { display: flex; align-items: center; margin-left: auto; padding-right: 36px; gap: 4px; color: #eee; }

/* Excel ribbon */
.xl-ribbon { display: flex; height: 172px; background: #b0b0b0; border-top: 1px solid #999; border-bottom: 1px solid #9b9b9b; position: relative; }
.xg { display: flex; flex-direction: column; border-right: 1px solid #8c8c8c; margin: 5px 0 7px; }
.xg.w1 { width: 104px; }
.xg.w2 { width: 181px; }
.xg.w3 { width: 126px; }
.xg.w4 { width: 107px; }
.xg.w5 { width: 104px; }
.xg-body { display: flex; justify-content: center; height: 124px; }
.xg.w2 .xg-body { padding-left: 16px; justify-content: flex-start; }
.xbtn { width: 75px; padding-top: 4px; display: flex; flex-direction: column; align-items: center; font-size: 22px; line-height: 29px; text-align: center; color: #3c3c3c; white-space: nowrap; }
.xbtn svg { height: 60px; margin-bottom: 3px; }
.xbtn.wide { width: 120px; }
.xg-label { font-size: 22px; padding-top: 12px; text-align: center; line-height: 22px; height: 34px; color: #3c3c3c; white-space: nowrap; }
.collapse { position: absolute; right: 12px; top: 148px; }
.fxt { font: italic 30px "Liberation Serif", serif; fill: #222; }
.fxf { font: italic 70px "Liberation Serif", serif; fill: #222; }
.qm { font: 700 20px "Liberation Sans", sans-serif; fill: #fff; text-anchor: middle; }

/* Excel formula */
.xl-formula { display: flex; padding: 20px 10px 19px; height: 157px; background: #666; align-items: flex-start; }
.namebox { width: 183px; height: 42px; background: #b0b0b0; display: flex; align-items: center; justify-content: space-between; padding: 0 12px 0 7px; font-size: 24px; color: #5a5a5a; }
.fdots { width: 57px; height: 42px; display: flex; flex-direction: column; gap: 6px; align-items: center; justify-content: center; }
.fdots i, .tdots i { width: 5px; height: 5px; background: #ddd; }
.fbtns { width: 200px; height: 42px; background: #b0b0b0; display: flex; align-items: center; gap: 43px; padding-left: 22px; }
.fxlabel { font: italic 28px "Liberation Serif", serif; color: #444; }
.fbar { margin-left: 7px; flex: 1; height: 118px; background: #b0b0b0; padding: 7px 10px 0 20px; display: flex; justify-content: space-between; font-size: 24px; color: #666; margin-right: -4px; }
.fbar svg { margin-top: 12px; }

/* Sheet */
.sheetwrap { display: flex; height: 1346px; background: #666; }
.sheet { width: 3110px;
  background:
    linear-gradient(#c4c4c4, #c4c4c4) 940px 0 / 1px 100% no-repeat,
    linear-gradient(#c4c4c4, #c4c4c4) 1065px 0 / 1px 100% no-repeat,
    linear-gradient(#c4c4c4, #c4c4c4) 1205px 0 / 1px 100% no-repeat,
    linear-gradient(#c4c4c4, #c4c4c4) 1318px 0 / 1px 100% no-repeat,
    linear-gradient(#c4c4c4, #c4c4c4) 1443px 0 / 1px 100% no-repeat,
    linear-gradient(#c4c4c4, #c4c4c4) 1655px 0 / 1px 100% no-repeat,
    repeating-linear-gradient(90deg, #a8a8a8 0 1px, transparent 1px 132.300px) 1788px 0 no-repeat,
    linear-gradient(90deg, #fff 1000px, #e6e6e6 1040px, #d2d2d2 2000px, #bcbcbc 3110px); }
.colhdr { display: grid; grid-template-columns: 52px 351px 213px 197px 127px 125px 1fr; height: 35px; background: #666; color: #d8d8d8; font-size: 26px; line-height: 35px; text-align: center; border-bottom: 2px solid #a0a0a0; }
.colhdr span { border-right: 1px solid #878787; height: 33px; }
.colhdr .none { border: 0; }
.corner { display: flex; justify-content: flex-end; padding: 6px 4px 0 0; }
.rows { height: 1311px; overflow: hidden; }
.r { display: grid; grid-template-columns: 52px 351px 213px 197px 1fr; height: 34.300px; font-size: 26px; line-height: 32px; }
.r > span { padding-top: 3px; border-bottom: 1px solid #dfe3dc; white-space: nowrap; overflow: hidden; }
.rn { background: #666; color: #dcdcdc; text-align: center; border-bottom: 2px solid #8a8a8a !important; font-size: 26px; }
.a { position: relative; background: #fff; padding-left: 4px; }
.b, .c { text-align: right; }
.b { background: #e2efda; padding-right: 12px; border-right: 1px solid #d4e4cb; }
.c { background: #fff; padding-right: 13px; }
.x { background: transparent; border-bottom-color: #cfcfcf !important; }
.r.g .a, .r.g .c { background: #e2efda; border-bottom-color: #cfe0c6; }
.r.g .b { border-bottom-color: #cfe0c6; }
.r.y .a, .r.y .b, .r.y .c { background: #fff200; border-bottom-color: #e8e4a8; }
.leaf { padding-left: 61px; }
.grp { font-weight: 700; color: #111; padding-left: 30px; }
.tog { position: absolute; left: 10px; top: 7px; width: 16px; height: 21px; border: 1px solid #b8c4d0; background: linear-gradient(#f2f5f8, #c9d4de); border-radius: 2px; }
.tog::after { content: ""; position: absolute; left: 3px; right: 3px; top: 9px; height: 2px; background: #667; }
.dash { padding-right: 43px; }
.r.hd { font-weight: 700; color: #222; }
.r.hd .a, .r.hd .b, .r.hd .c { background: #fff; border-bottom: 2px solid #a9d08e; }
.r.hd .a { padding-left: 5px; }
.r.hd .b { text-align: left; padding-left: 5px; padding-right: 0; border-right: 0; }
.r.hd .c { text-align: left; padding-left: 12px; }
.ddb { position: absolute; right: 1px; top: 2px; width: 30px; height: 30px; background: linear-gradient(#f4f4f4, #e4e4e4); border: 1px solid #ccc; display: flex; align-items: center; justify-content: center; }

.vscroll { width: 24px; display: flex; flex-direction: column; background: #3a3a3a; margin-top: -5px; }
.vbtn { height: 37px; background: #b4b4b4; display: flex; align-items: center; justify-content: center; }
.vbtn.low { height: 27px; }
.vthumb { height: 260px; background: #9a9a9a; }
.vtrack { flex: 1; background: #3c3c3c; }

/* Sheet tabs */
.sheettabs { display: flex; align-items: stretch; height: 41px; background: #666; border-top: 2px solid #4a4a4a; font-size: 25px; color: #cfcfcf; line-height: 37px; }
.navs { width: 141px; display: flex; align-items: center; padding-left: 34px; gap: 32px; border-right: 1px solid #7e7e7e; }
.more { color: #ddd; font-size: 20px; margin: -8px 0 0 -6px; }
.stab { padding: 0 14px; border-right: 1px solid #7e7e7e; white-space: nowrap; }
.stab.on { background: #f2f6f3; color: #2d7c55; border-bottom: 3px solid #217346; border-right: 0; padding: 0 15px; margin-left: -5px; }
.addsheet { width: 108px; display: flex; align-items: center; justify-content: center; }
.tdots { width: 50px; display: flex; flex-direction: column; gap: 6px; align-items: center; justify-content: center; margin-left: 66px; }
.hscroll { margin: 4px 0 3px 0; display: flex; width: 1198px; background: #3c3c3c; }
.hb { width: 28px; background: #b8b8b8; display: flex; align-items: center; justify-content: center; border-right: 1px solid #999; }
.hthumb { width: 1085px; background: #bdbdbd; }
.htrack { flex: 1; background: #444; }

/* Status */
.statusbar { display: flex; align-items: center; height: 40px; background: #606060; font-size: 22px; color: #d0d0d0; border-bottom: 1px solid #777; }
.ready { margin-left: 13px; }
.calc { margin-left: 33px; transform: scale(.9); }
.acc { margin-left: 37px; transform: scale(.9); }
.accessibility { margin-left: 3px; white-space: nowrap; }
.viewbtns { margin-left: 2254px; display: flex; height: 100%; }
.vb { width: 74px; display: flex; align-items: center; justify-content: center; }
.vb.on { background: #424242; }
.zoomctl { display: flex; align-items: center; margin-left: 10px; gap: 10px; color: #ddd; }
.zm { font-size: 24px; }
.slider { position: relative; width: 182px; height: 4px; background: #eee; }
.knob { position: absolute; left: 85px; top: -14px; width: 10px; height: 32px; background: #f6f6f6; }
.pct { margin-left: 20px; font-size: 26px; color: #e6e6e6; }

/* Taskbar */
.taskbar { position: relative; display: flex; align-items: center; height: 88px; background: linear-gradient(90deg, #dfe3d8 0%, #dde3d2 35%, #dde3cb 60%, #e4e6c4 78%, #e9dfd4 90%, #ecdcd8 100%); }
.weather { display: flex; align-items: center; margin-left: 36px; gap: 15px; width: 942px; }
.wtext { display: flex; flex-direction: column; font-size: 22px; line-height: 30px; color: #333; }
.wtext .dim { color: #777; }
.center { display: flex; align-items: center; }
.search { margin-left: 27px; width: 398px; height: 56px; border-radius: 28px; background: #eef2e8; border: 1px solid #dfe3d6; box-shadow: 0 1px 2px #bbb; display: flex; align-items: center; padding-left: 17px; font-size: 26px; color: #666; gap: 16px; }
.violin { margin-left: auto; margin-right: 8px; }
.tk { margin-left: 37px; }
.tk.tv { margin-left: 22px; }
.xltile { position: relative; margin-left: 25px; width: 66px; height: 68px; background: #f2f2e0; border-radius: 6px; box-shadow: 0 0 2px #bbb; display: flex; align-items: center; justify-content: center; }
.xltile i { position: absolute; bottom: 3px; left: 20px; width: 28px; height: 6px; border-radius: 3px; background: #1a72d8; }
.xt { font: 700 18px "Liberation Sans", sans-serif; fill: #fff; text-anchor: middle; }
.tray { display: flex; align-items: center; margin-left: auto; padding-right: 34px; }
.t1 { margin-left: 31px; }
.t2 { margin-left: 28px; }
.t3 { margin-left: 34px; }
.ime { margin-left: 33px; font-size: 30px; color: #888; }
.t4 { margin-left: 40px; }
.t5 { margin-left: 39px; }
.t6 { margin-left: 12px; }
.t7 { margin-left: 14px; }
.clock { margin-left: 29px; display: flex; flex-direction: column; align-items: flex-end; font-size: 23px; line-height: 30px; color: #333; }
.bell { margin-left: 16px; }

/* Power Pivot window */
.pp { position: absolute; left: 1017px; top: 444px; width: 2093px; height: 1291px; background: #fff; border-radius: 14px; box-shadow: 0 0 28px rgba(0,0,0,.45); display: flex; flex-direction: column; overflow: hidden; }
.pp-title { display: flex; align-items: center; height: 53px; padding: 0 0 4px 12px; }
.pp-xl { margin-left: 30px; }
.pp-save { margin-left: 9px; }
.pp-undo { margin-left: 15px; }
.pp-redo { margin-left: 29px; }
.pp-more { margin: 0 19px 0 30px; }
.pp-name { font-size: 23px; color: #333; padding-left: 10px; border-left: 1px solid #ccc; white-space: nowrap; margin-right: auto; }
.pp-win { width: 87px; display: flex; justify-content: center; }
.pp-win:last-child { margin-right: -4px; }
.pp-tabs { display: flex; height: 45px; font-size: 24px; align-items: stretch; border-bottom: 2px solid #d8dadc; }
.pt { width: 93px; text-align: center; line-height: 43px; white-space: nowrap; }
.pt.file { width: 103px; background: #1277cf; color: #fff; }
.pt.on { background: #fff; border: 1px solid #d8dadc; border-bottom: 0; height: 45px; }
.pp-help { margin-left: auto; display: flex; align-items: center; gap: 14px; padding-right: 5px; }
.pp-ribbon { display: flex; height: 186px; background: #f3f5f5; border-bottom: 3px solid #d4d4d4; }
.pg { display: flex; flex-direction: column; padding-top: 18px; border-right: 1px solid #e2e4e4; margin-bottom: 4px; }
.pg.g1 { width: 233px; }
.pg.g2 { width: 321px; }
.pg.g3 { width: 95px; }
.pg.g4 { width: 95px; }
.pg.g5 { width: 228px; }
.pg.g6 { width: 378px; }
.pg.g7 { width: 94px; }
.pg-body { display: flex; height: 128px; }
.pg-body.center { justify-content: center; }
.pg-label { font-size: 22px; line-height: 36px; padding-top: 4px; text-align: center; color: #444; white-space: nowrap; }
.pb { width: 76px; display: flex; flex-direction: column; align-items: center; font-size: 22px; line-height: 30px; text-align: center; color: #333; white-space: nowrap; }
.pb svg { height: 60px; }
.pb small { font-size: 13px; margin-left: 2px; }
.pb.dim { color: #a4a8aa; }
.g1 .pg-body { padding-left: 10px; }
.g2 .pg-body { padding-left: 5px; }
.w70 { width: 72px; }
.w90 { width: 92px; margin-left: 2px; }
.w82 { width: 84px; }
.fa { color: #d0d0d0; }
.plist { display: flex; flex-direction: column; margin-top: -10px; font-size: 22px; color: #a4a8aa; white-space: nowrap; }
.pl { display: flex; align-items: center; height: 43px; gap: 5px; }
.g1 .plist { padding-left: 5px; }
.g6 .plist { padding-left: 12px; width: 192px; }
.fmt { flex-direction: column; padding-left: 12px; font-size: 22px; color: #a4a8aa; margin-top: -8px; }
.fr { height: 43px; line-height: 43px; white-space: nowrap; }
.fr small { font-size: 12px; color: #ccc; }
.syms { display: flex; align-items: center; }
.syms b { font-size: 30px; color: #9fb0c0; width: 28px; text-align: center; }
.syms b.pc { width: 36px; }
.syms small { width: 21px; }
.syms b.tiny { font-size: 15px; width: 44px; }

.pp-formula { display: flex; height: 112px; border-bottom: 2px solid #d0d0d0; position: relative; }
.pf-name { width: 305px; border-right: 1px solid #cfcfcf; }
.pf-box { height: 38px; padding-left: 3px; border-bottom: 2px solid #d8d8d8; }
.pf-box i { display: block; width: 140px; height: 36px; background: #d0d0d0; }
.pf-text { padding: 11px 0 0 2px; font-size: 25.700px; line-height: 34px; color: #333; white-space: nowrap; }
.pf-text em { color: #2e8b3a; }
.pf-exp { position: absolute; right: 5px; top: 0; width: 27px; height: 40px; border: 1px solid #ccc; border-top: 0; display: flex; align-items: center; justify-content: center; }

.pp-grid { margin-top: 10px; display: grid; grid-template-columns: 2056px 32px; grid-template-rows: 150px 17px 623px; }
.tr { display: grid; grid-template-columns: 31px 476px 400px 169px 380px 456px 144px; height: 37.700px; font-size: 25px; line-height: 36px; white-space: nowrap; }
.tr > span { overflow: hidden; border-right: 1px solid #dedede; border-bottom: 2px solid #e2e2e2; padding-left: 8px; position: relative; }
.tr > .num { padding: 0 0 0 10px; color: #777; }
.tr > span:nth-child(2) { padding-left: 0; }
.tr > span:nth-child(4) { padding-left: 16px; }
.tr > .rt { text-align: right; padding-right: 9px; }
.th { height: 37px; }
.th > span { background: #217346; color: #c5dccf; border-color: #4f9a72; font-size: 26px; }
.th > span:first-child { background: #fff; border: 0; }
.tr.th > span:nth-child(4) { padding-left: 10px; }
.ticon { position: absolute; right: 36px; top: 3px; }
.flt { position: absolute; right: 4px; top: 3px; width: 26px; height: 30px; border-radius: 2px; background: linear-gradient(#eef1f4, #cfd6de); }
.flt::after { content: ""; position: absolute; left: 8px; top: 12px; border: 5px solid transparent; border-top: 8px solid #2a3f8f; }
.th > .addcol { background: #8cc7a4; color: #eaf6ee; font-style: italic; padding-left: 12px; border: 0; }
.pp-sc { background: #f0f0f0; display: flex; justify-content: center; }
.pp-sc i { display: block; width: 16px; background: #7f7f7f; }
.pp-sc.upper i { margin-top: 32px; height: 32px; }
.pp-sc.lower i { margin-top: 25px; height: 104px; }
.pp-split { grid-column: 1 / -1; background: #a2a2a2; }
.pp-meas { font-size: 25px; line-height: 33px;
  background:
    linear-gradient(#e4e4e4, #e4e4e4) 31px 0 / 1px 100% no-repeat,
    linear-gradient(#e4e4e4, #e4e4e4) 507px 0 / 1px 100% no-repeat,
    linear-gradient(#e4e4e4, #e4e4e4) 907px 0 / 1px 100% no-repeat,
    linear-gradient(#e4e4e4, #e4e4e4) 1076px 0 / 1px 100% no-repeat,
    linear-gradient(#e4e4e4, #e4e4e4) 1456px 0 / 1px 100% no-repeat,
    linear-gradient(#e4e4e4, #e4e4e4) 1912px 0 / 1px 100% no-repeat,
    linear-gradient(#e4e4e4, #e4e4e4) 2056px 0 / 1px 100% no-repeat,
    repeating-linear-gradient(180deg, transparent 0 24.500px, #e6e6e6 24.500px 26.500px, transparent 26.500px 33.200px);
  color: #5c5c5c; overflow: hidden; }
.mr { display: grid; grid-template-columns: 31px 476px 400px 169px 380px 456px 144px; height: 33.200px; white-space: nowrap; }
.mr.first { height: 26px; }
.mr.first span { margin-top: -4px; }
.mr span { padding-left: 8px; }
.pp-hs { height: 27px; background: #f0f0f0; padding: 2px 68px 12px 1148px; }
.pp-hs i { display: block; height: 100%; background: #8a8a8a; }
.pp-sheets { display: flex; height: 33px; font-size: 22px; line-height: 32px; color: #444; padding-left: 5px; white-space: nowrap; overflow: hidden; }
.ps { padding: 0 10px; border-right: 1px solid #cfcfcf; }
.ps.on { color: #217346; font-weight: 700; width: 97px; padding: 0 0 0 7px; border-left: 1px solid #217346; }
.pp-rule { height: 6px; margin: 0 5px; background: linear-gradient(#5e9f84 0 2px, #d7e7df 2px 4px, #5e9f84 4px 6px); }

.ring { position: absolute; left: 2207px; top: 522px; width: 28px; height: 28px; border: 7px solid #1a8fe0; border-radius: 50%; background: transparent; }
```
